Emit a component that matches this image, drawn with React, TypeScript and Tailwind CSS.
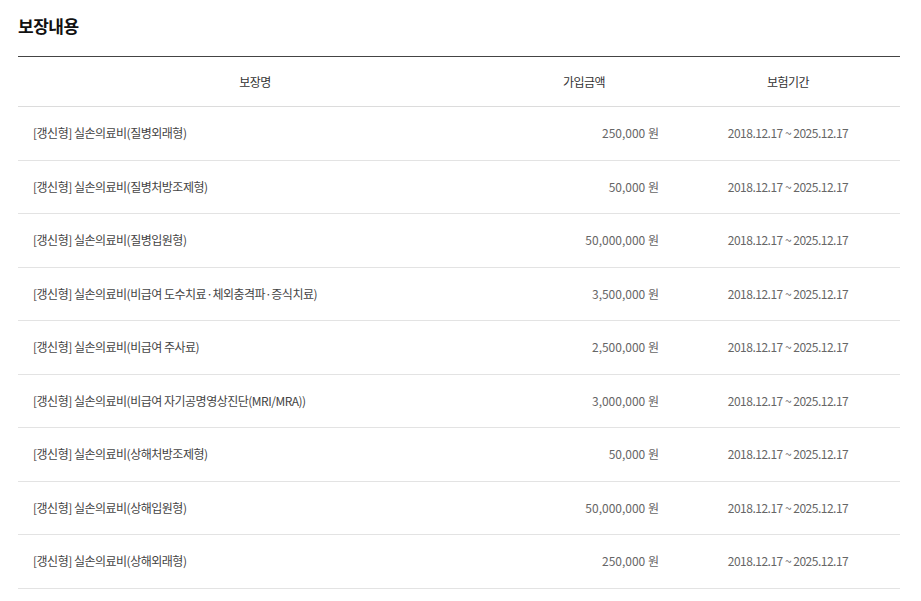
import React from 'react'

type Coverage = {
    name: string
    amount: string
    period: string
}

const rows: Coverage[] = [
    { name: '[갱신형] 실손의료비(질병외래형)', amount: '250,000 원', period: '2018.12.17 ~ 2025.12.17' },
    { name: '[갱신형] 실손의료비(질병처방조제형)', amount: '50,000 원', period: '2018.12.17 ~ 2025.12.17' },
    { name: '[갱신형] 실손의료비(질병입원형)', amount: '50,000,000 원', period: '2018.12.17 ~ 2025.12.17' },
    { name: '[갱신형] 실손의료비(비급여 도수치료·체외충격파·증식치료)', amount: '3,500,000 원', period: '2018.12.17 ~ 2025.12.17' },
    { name: '[갱신형] 실손의료비(비급여 주사료)', amount: '2,500,000 원', period: '2018.12.17 ~ 2025.12.17' },
    { name: '[갱신형] 실손의료비(비급여 자기공명영상진단(MRI/MRA))', amount: '3,000,000 원', period: '2018.12.17 ~ 2025.12.17' },
    { name: '[갱신형] 실손의료비(상해처방조제형)', amount: '50,000 원', period: '2018.12.17 ~ 2025.12.17' },
    { name: '[갱신형] 실손의료비(상해입원형)', amount: '50,000,000 원', period: '2018.12.17 ~ 2025.12.17' },
    { name: '[갱신형] 실손의료비(상해외래형)', amount: '250,000 원', period: '2018.12.17 ~ 2025.12.17' },
]

export default function App() {
    return (
        <div className="min-h-screen bg-white px-[18px] pt-[14px] font-['Noto_Sans_CJK_KR','Noto_Sans',sans-serif] text-[12px] tracking-[-0.5px]">
            {/* TITLE */}
            <h2 className="text-[17px] font-bold leading-[24px] text-[#111]">보장내용</h2>

            {/* COVERAGE TABLE */}
            <table className="mt-[18px] w-[882px] table-fixed border-collapse border-t border-[#444]">
                <colgroup>
                    <col className="w-[474px]" />
                    <col className="w-[184px]" />
                    <col className="w-[224px]" />
                </colgroup>
                <thead>
                    <tr className="h-[50px] border-b border-[#dcdcdc] text-[#333]">
                        <th className="text-center font-normal">보장명</th>
                        <th className="text-center font-normal">가입금액</th>
                        <th className="text-center font-normal">보험기간</th>
                    </tr>
                </thead>
                <tbody>
                    {rows.map((row, i) => (
                        <tr key={i} className="h-[53.5px] border-b border-[#e3e3e3]">
                            <td className="pl-[15px] text-left text-[#444]">{row.name}</td>
                            <td className="pr-[17px] text-right tracking-normal text-[#666]">{row.amount}</td>
                            <td className="text-center text-[#666]">{row.period}</td>
                        </tr>
                    ))}
                </tbody>
            </table>
        </div>
    )
}
